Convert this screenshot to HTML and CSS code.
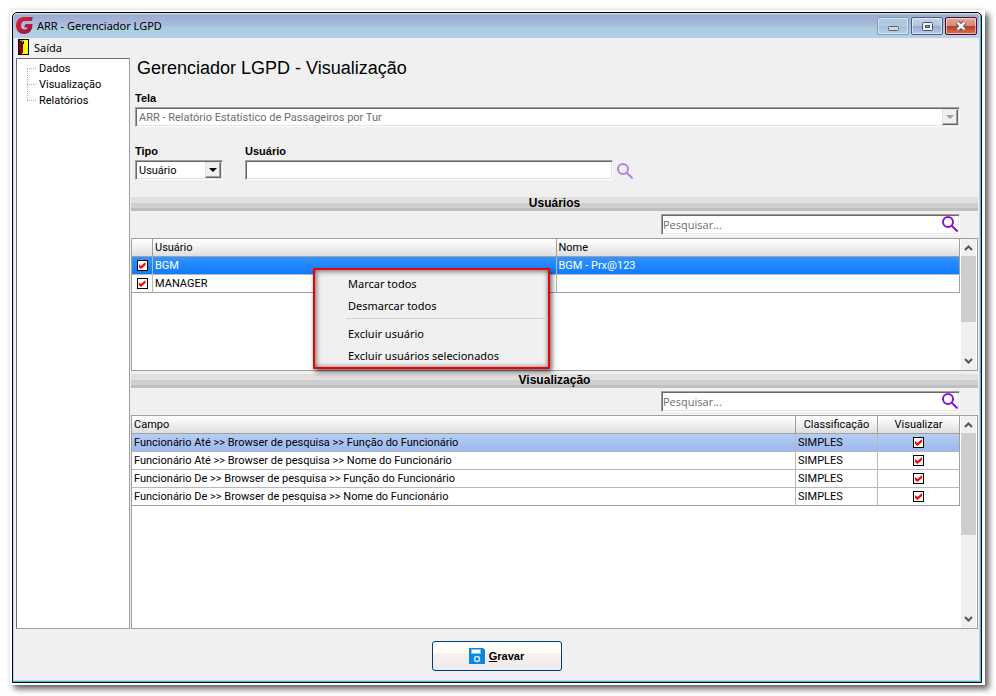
FILE: index.html
```html
<!DOCTYPE html>
<html lang="pt-BR">
<head>
    <meta charset="UTF-8">
    <meta name="viewport" content="width=device-width, initial-scale=1.0">
    <title>ARR - Gerenciador LGPD</title>
    <link rel="stylesheet" href="styles.css">
</head>
<body>
    <div class="frame">
        <div class="window">
            <header class="titlebar">
                <svg class="app-logo" viewBox="0 0 17 17" width="17" height="17">
                    <defs>
                        <linearGradient id="logo" x1="0" y1="0" x2="1" y2="1">
                            <stop offset="0" stop-color="#e2203c"/>
                            <stop offset="1" stop-color="#98123f"/>
                        </linearGradient>
                    </defs>
                    <path fill="url(#logo)" d="M17 0 L15.500 4 H9 C6.500 4 5 6 5 8.500 C5 11 6.500 12.500 8.500 12.500 C10 12.500 11.300 11.800 11.800 10.500 H8 L9.500 7 H16.500 C16.800 13 13.500 17 8 17 C3.500 17 0 13.500 0 8.500 C0 3.500 3.500 0 8 0 Z"/>
                </svg>
                <h1 class="window-title">ARR - Gerenciador LGPD</h1>
                <div class="window-buttons">
                    <button class="window-button minimize" type="button" aria-label="Minimizar">
                        <svg viewBox="0 0 12 10" width="12" height="10"><rect x="1.500" y="5.500" width="10" height="4" rx="1" fill="#d8d8d0" stroke="#5a6068"/></svg>
                    </button>
                    <button class="window-button maximize" type="button" aria-label="Maximizar">
                        <svg viewBox="0 0 12 10" width="12" height="10"><rect x="1.500" y="1.500" width="10" height="8" rx="1" fill="#eef0f4" stroke="#4a5068"/><rect x="4.500" y="4.500" width="4" height="2" fill="#8da2d0" stroke="#4a5068"/></svg>
                    </button>
                    <button class="window-button close" type="button" aria-label="Fechar">
                        <svg viewBox="0 0 12 10" width="12" height="10"><path d="M2.500 1.500 L9.500 8.500 M9.500 1.500 L2.500 8.500" stroke="#4a4a60" stroke-width="4.500"/><path d="M2.500 1.500 L9.500 8.500 M9.500 1.500 L2.500 8.500" stroke="#f4f4f4" stroke-width="2.500"/></svg>
                    </button>
                </div>
            </header>

            <nav class="menubar">
                <button class="menu-button" type="button">
                    <svg viewBox="0 0 11 16" width="11" height="16" shape-rendering="crispEdges">
                        <rect width="11" height="16" fill="#000"/>
                        <rect x="1" y="1" width="9" height="14" fill="#ff0"/>
                        <path d="M1 1 H3 L5 4 V14 L3 15 H1 Z" fill="#800000"/>
                        <rect x="2" y="1" width="3" height="1" fill="#00c8d8"/>
                        <rect x="5" y="2" width="1" height="3" fill="#000"/>
                        <rect x="4" y="5" width="1" height="1" fill="#000"/>
                    </svg>
                    Saída
                </button>
            </nav>

            <div class="workspace">
                <nav class="tree">
                    <ul class="tree-list">
                        <li><a href="#dados">Dados</a></li>
                        <li><a href="#visualizacao">Visualização</a></li>
                        <li><a href="#relatorios">Relatórios</a></li>
                    </ul>
                </nav>

                <main class="content">
                    <div class="form">
                        <h2 class="page-title">Gerenciador LGPD - Visualização</h2>
                        <div class="field">
                            <label for="tela">Tela</label>
                            <div class="combo disabled">
                                <select id="tela" disabled>
                                    <option>ARR - Relatório Estatístico de Passageiros por Tur</option>
                                </select>
                                <span class="combo-arrow"></span>
                            </div>
                        </div>
                        <div class="form-row">
                            <div class="field field-type">
                                <label for="tipo">Tipo</label>
                                <div class="combo">
                                    <select id="tipo">
                                        <option>Usuário</option>
                                    </select>
                                    <span class="combo-arrow"></span>
                                </div>
                            </div>
                            <div class="field field-user">
                                <label for="usuario">Usuário</label>
                                <input class="text-input" id="usuario" type="text">
                            </div>
                            <button class="icon-button faded" type="button" aria-label="Buscar usuário">
                                <svg viewBox="0 0 16 16" width="16" height="16"><circle cx="6" cy="6" r="5" /><path d="M9.500 9.500 L15.500 15.500"/></svg>
                            </button>
                        </div>
                    </div>

                    <section class="panel">
                        <h3 class="section-bar">Usuários</h3>
                        <div class="search">
                            <input type="text" placeholder="Pesquisar..." aria-label="Pesquisar usuários">
                            <button class="icon-button" type="button" aria-label="Pesquisar">
                                <svg viewBox="0 0 16 16" width="16" height="16"><circle cx="6" cy="6" r="5" /><path d="M9.500 9.500 L15.500 15.500"/></svg>
                            </button>
                        </div>
                        <div class="grid-box users">
                            <table class="grid">
                                <thead>
                                    <tr><th class="col-check"></th><th>Usuário</th><th>Nome</th></tr>
                                </thead>
                                <tbody>
                                    <tr class="selected">
                                        <td class="check"><input type="checkbox" aria-label="BGM" checked></td>
                                        <td>BGM</td>
                                        <td>BGM - Prx@123</td>
                                    </tr>
                                    <tr>
                                        <td class="check"><input type="checkbox" aria-label="MANAGER" checked></td>
                                        <td>MANAGER</td>
                                        <td></td>
                                    </tr>
                                </tbody>
                            </table>
                            <div class="scrollbar">
                                <svg viewBox="0 0 9 6" width="9" height="6"><path d="M1 5 L4.500 1.500 L8 5"/></svg>
                                <div class="track"><div class="thumb"></div></div>
                                <svg viewBox="0 0 9 6" width="9" height="6"><path d="M1 1 L4.500 4.500 L8 1"/></svg>
                            </div>
                            <div class="context-menu">
                                <button type="button">Marcar todos</button>
                                <button type="button">Desmarcar todos</button>
                                <hr>
                                <button type="button">Excluir usuário</button>
                                <button type="button">Excluir usuários selecionados</button>
                            </div>
                        </div>
                    </section>

                    <section class="panel panel-grow">
                        <h3 class="section-bar">Visualização</h3>
                        <div class="search">
                            <input type="text" placeholder="Pesquisar..." aria-label="Pesquisar campos">
                            <button class="icon-button" type="button" aria-label="Pesquisar">
                                <svg viewBox="0 0 16 16" width="16" height="16"><circle cx="6" cy="6" r="5" /><path d="M9.500 9.500 L15.500 15.500"/></svg>
                            </button>
                        </div>
                        <div class="grid-box fields">
                            <table class="grid">
                                <thead>
                                    <tr><th>Campo</th><th class="col-small">Classificação</th><th class="col-small">Visualizar</th></tr>
                                </thead>
                                <tbody>
                                    <tr class="current">
                                        <td>Funcionário Até &gt;&gt; Browser de pesquisa &gt;&gt; Função do Funcionário</td>
                                        <td>SIMPLES</td>
                                        <td class="check"><input type="checkbox" aria-label="Visualizar" checked></td>
                                    </tr>
                                    <tr>
                                        <td>Funcionário Até &gt;&gt; Browser de pesquisa &gt;&gt; Nome do Funcionário</td>
                                        <td>SIMPLES</td>
                                        <td class="check"><input type="checkbox" aria-label="Visualizar" checked></td>
                                    </tr>
                                    <tr>
                                        <td>Funcionário De &gt;&gt; Browser de pesquisa &gt;&gt; Função do Funcionário</td>
                                        <td>SIMPLES</td>
                                        <td class="check"><input type="checkbox" aria-label="Visualizar" checked></td>
                                    </tr>
                                    <tr>
                                        <td>Funcionário De &gt;&gt; Browser de pesquisa &gt;&gt; Nome do Funcionário</td>
                                        <td>SIMPLES</td>
                                        <td class="check"><input type="checkbox" aria-label="Visualizar" checked></td>
                                    </tr>
                                </tbody>
                            </table>
                            <div class="scrollbar">
                                <svg viewBox="0 0 9 6" width="9" height="6"><path d="M1 5 L4.500 1.500 L8 5"/></svg>
                                <div class="track"><div class="thumb"></div></div>
                                <svg viewBox="0 0 9 6" width="9" height="6"><path d="M1 1 L4.500 4.500 L8 1"/></svg>
                            </div>
                        </div>
                    </section>
                </main>
            </div>

            <footer class="footer">
                <button class="save-button" type="button">
                    <svg viewBox="0 0 16 16" width="16" height="16">
                        <path d="M0 0 H14 L16 2 V16 H0 Z" fill="#0c84e4"/>
                        <rect x="2.500" y="1.500" width="9" height="4" fill="#fff" stroke="#7cc4f8"/>
                        <circle cx="8" cy="11" r="2.500" fill="none" stroke="#c8e8ff" stroke-width="1.500"/>
                    </svg>
                    <span><u>G</u>ravar</span>
                </button>
            </footer>
        </div>
    </div>
</body>
</html>
```

FILE: styles.css
```css
* {
    box-sizing: border-box;
}

body {
    margin: 0;
    min-height: 100vh;
    padding: 10px 11px 11px 10px;
    display: flex;
    background: #fff;
    color: #000;
    font-family: Roboto, "Liberation Sans", Arial, sans-serif;
    font-size: 11px;
}

h1, h2, h3, ul {
    margin: 0;
    padding: 0;
    font-weight: normal;
}

button, input, select {
    font: inherit;
    color: inherit;
}

.frame {
    flex: 1;
    display: flex;
    padding: 2px 3px 2px 2px;
    background: #fff;
    box-shadow: 4px 4px 6px rgba(0, 0, 0, 0.6), 0 0 4px rgba(0, 0, 0, 0.12);
}

.window {
    flex: 1;
    min-width: 0;
    display: flex;
    flex-direction: column;
    padding: 0 2px 1px 1px;
    background: #f0f0f0;
    border: 1px solid #000;
    border-radius: 5px 5px 0 0;
    box-shadow: inset -1px -1px 0 #3cc4e0, inset 1px 0 0 #c0d0f0, inset -2px -2px 0 #c0d0ee;
}

/* Title bar */
.titlebar {
    display: flex;
    align-items: center;
    height: 25px;
    padding-left: 2px;
    gap: 4px;
    border-radius: 4px 4px 0 0;
    background: linear-gradient(#dfe6f2 0, #9dadd0 2px, #a4b5d9 8px, #a9bcdd 12px, #accfe0 16px, #aed1e2 20px, #b8cdec 23px);
}

.window-title {
    flex: 1;
    font-family: "Noto Sans", "Open Sans", sans-serif;
    font-size: 11px;
}

.window-buttons {
    display: flex;
    gap: 2px;
    padding-right: 2px;
}

.window-button {
    width: 32px;
    height: 18px;
    padding: 0;
    display: flex;
    align-items: center;
    justify-content: center;
    border: 1px solid #4c5c80;
    border-radius: 2px;
    background: linear-gradient(#c4d2ea 0, #b4c5e3 50%, #94a9d0 50%, #b5cce6 100%);
    box-shadow: inset 0 0 0 1px rgba(255, 255, 255, 0.5);
}

.window-button.minimize {
    border-color: #7e9cb8;
    background: linear-gradient(#abc9dc 0, #b0cae4 50%, #a8bedd 50%, #aed1e2 100%);
}

.window-button.close {
    border-color: #4a1420;
    background: linear-gradient(#e8a59a 0, #d98478 50%, #bc3a24 50%, #d87056 100%);
}

/* Menu bar */
.menubar {
    height: 20px;
    padding: 0 0 2px 4px;
    display: flex;
    align-items: center;
}

.menu-button {
    display: flex;
    align-items: center;
    gap: 5px;
    padding: 0;
    border: 0;
    background: none;
    font-family: "Noto Sans", "Open Sans", sans-serif;
    font-size: 11px;
}

/* Tree and content */
.workspace {
    flex: 1;
    display: flex;
    gap: 1px;
    padding: 0 1px 0 2px;
}

.tree {
    width: 114px;
    padding: 1px 0 0 10px;
    background: #fff;
    border: 1px solid #a0a0a0;
    border-left-color: #707070;
    border-top-color: #707070;
}

.tree-list {
    list-style: none;
    position: relative;
}

.tree-list li {
    height: 16px;
    display: flex;
    align-items: center;
}

.tree-list li::before {
    content: "";
    width: 9px;
    margin-right: 3px;
    border-top: 1px dotted #b0b0b0;
}

.tree-list::before {
    content: "";
    position: absolute;
    top: 8px;
    bottom: 8px;
    border-left: 1px dotted #b0b0b0;
}

.tree a {
    color: inherit;
    text-decoration: none;
}

.content {
    flex: 1;
    min-width: 0;
    display: flex;
    flex-direction: column;
    gap: 3px;
}

.form {
    padding: 0 18px 14px 4px;
}

.page-title {
    height: 20px;
    padding-left: 2px;
    font-family: "Liberation Sans", Arial, sans-serif;
    font-size: 18px;
    line-height: 20px;
    margin-bottom: 12px;
}

.field label {
    display: block;
    height: 17px;
    line-height: 16px;
    font-family: "Liberation Sans", Arial, sans-serif;
    font-weight: bold;
}

.form-row {
    display: flex;
    align-items: flex-end;
    margin-top: 16px;
}

.field-type {
    width: 88px;
    margin-right: 22px;
}

.field-user {
    flex: 0 1 368px;
}

.combo, .text-input, .search {
    height: 20px;
    background: #fff;
    border: 1px solid;
    border-color: #a0a0a0 #fff #fff #a0a0a0;
    box-shadow: inset 1px 1px 0 #696969, inset -1px -1px 0 #e3e3e3;
}

.text-input {
    display: block;
    width: 100%;
    padding: 0 3px;
}

.combo {
    position: relative;
}

.combo select {
    width: 100%;
    height: 18px;
    padding: 1px 18px 0 3px;
    appearance: none;
    border: 0;
    background: none;
    opacity: 1;
}

.combo.disabled select {
    color: #6d6d6d;
}

.combo-arrow {
    position: absolute;
    top: 1px;
    right: 1px;
    bottom: 1px;
    width: 16px;
    display: flex;
    align-items: center;
    justify-content: center;
    background: #f0f0f0;
    border: 1px solid;
    border-color: #e3e3e3 #696969 #696969 #e3e3e3;
    box-shadow: inset -1px -1px 0 #a0a0a0;
    pointer-events: none;
}

.combo-arrow::before {
    content: "";
    border: 4px solid transparent;
    border-top-color: #000;
    border-bottom: 0;
}

.combo.disabled .combo-arrow::before {
    border-top-color: #a0a0a0;
}

.icon-button {
    width: 16px;
    height: 16px;
    padding: 0;
    border: 0;
    background: none;
}

.icon-button svg {
    display: block;
    fill: none;
    stroke: #8412dc;
    stroke-width: 2;
}

.icon-button.faded {
    margin: 0 0 1px 4px;
    opacity: 0.5;
}

/* Panels */
.panel {
    display: flex;
    flex-direction: column;
    gap: 3px;
}

.panel-grow {
    flex: 1;
}

.section-bar {
    height: 14px;
    line-height: 12px;
    text-align: center;
    font-family: "Liberation Sans", Arial, sans-serif;
    font-size: 12px;
    font-weight: bold;
    background: linear-gradient(#e0e0e0 6px, #cfcfcf 6px, #cfcfcf 11px, #bfbfbf 11px);
}

.search {
    width: 299px;
    height: 21px;
    margin-right: 18px;
    align-self: flex-end;
    display: flex;
    align-items: flex-start;
    padding: 1px 1px 0 0;
}

.search input {
    flex: 1;
    min-width: 0;
    height: 17px;
    padding: 0 1px;
    border: 0;
    background: none;
    font-family: "Open Sans", sans-serif;
}

.search input::placeholder {
    color: #6d6d6d;
    opacity: 1;
}

.grid-box {
    position: relative;
    display: flex;
    align-items: flex-start;
    gap: 1px;
    background: #fff;
    border: 1px solid #a0a0a0;
}

.grid-box.users {
    min-height: 133px;
}

.grid-box.fields {
    flex: 1;
}

.grid {
    flex: 1;
    width: 100%;
    min-width: 0;
    table-layout: fixed;
    border-collapse: separate;
    border-spacing: 0;
}

.grid th, .grid td {
    height: 18px;
    padding: 0 2px;
    text-align: left;
    font-weight: normal;
    white-space: nowrap;
    line-height: 16px;
    border-right: 1px solid #b8b8b8;
    border-bottom: 1px solid #b8b8b8;
}

.grid th {
    background: linear-gradient(#fff, #f4f4f4 40%, #dedede);
    border-color: #a0a0a0;
}

.grid tr:last-child td {
    border-bottom-color: #a0a0a0;
}

.grid th:last-child, .grid td:last-child {
    border-right-color: #a0a0a0;
}

.grid .col-check {
    width: 21px;
}

.grid .col-small {
    width: 82px;
    text-align: center;
}

.grid .selected td {
    color: #fff;
    background: linear-gradient(#3394ff, #0f7aff);
}

.grid .current td {
    background: linear-gradient(#b6cdf3, #9cb8f0);
}

.grid .check {
    padding: 0;
    text-align: center;
}

.check input {
    appearance: none;
    display: block;
    width: 11px;
    height: 11px;
    margin: 0 auto;
    border: 1px solid #000;
    background: #fff;
}

.check input:checked::before {
    content: "";
    display: block;
    width: 7px;
    height: 7px;
    margin: 1px;
    background: #f00;
    clip-path: polygon(0 28%, 35% 58%, 100% 0, 100% 42%, 35% 100%, 0 70%);
}

.scrollbar {
    width: 16px;
    flex-shrink: 0;
    align-self: stretch;
    display: flex;
    flex-direction: column;
    align-items: center;
    padding: 6px 0;
    background: #f0f0f0;
    border-right: 1px solid #fff;
}

.scrollbar svg {
    fill: none;
    stroke: #555;
    stroke-width: 2;
}

.track {
    flex: 1;
    width: 100%;
    padding: 5px 0;
}

.thumb {
    height: 66px;
    background: #cdcdcd;
}

.fields .thumb {
    height: 102px;
}

/* Popup menu over the users grid */
.context-menu {
    position: absolute;
    left: 181px;
    top: 29px;
    width: 237px;
    padding: 2px 0 1px;
    background: #f0f0f0;
    border: 2px solid #f00000;
    box-shadow: 2px 3px 5px rgba(0, 0, 0, 0.6), inset 2px 2px 5px rgba(0, 0, 0, 0.4), inset -1px -1px 4px rgba(0, 0, 0, 0.3);
}

.context-menu button {
    display: block;
    width: 100%;
    height: 22px;
    padding: 0 0 0 33px;
    border: 0;
    background: none;
    text-align: left;
    font-family: "Noto Sans", "Open Sans", sans-serif;
}

.context-menu hr {
    margin: 2px 0 3px 31px;
    border: 0;
    border-top: 1px solid #d0d0d0;
}

/* Footer */
.footer {
    padding: 12px 2px 10px;
    display: flex;
    justify-content: center;
}

.save-button {
    width: 130px;
    height: 30px;
    display: flex;
    align-items: center;
    justify-content: center;
    gap: 4px;
    border: 1px solid #003c74;
    border-radius: 3px;
    background: linear-gradient(#fff 0, #fffff4 38%, #f8efec 42%, #ececec 100%);
    font-family: "Liberation Sans", Arial, sans-serif;
    font-weight: bold;
}
```
